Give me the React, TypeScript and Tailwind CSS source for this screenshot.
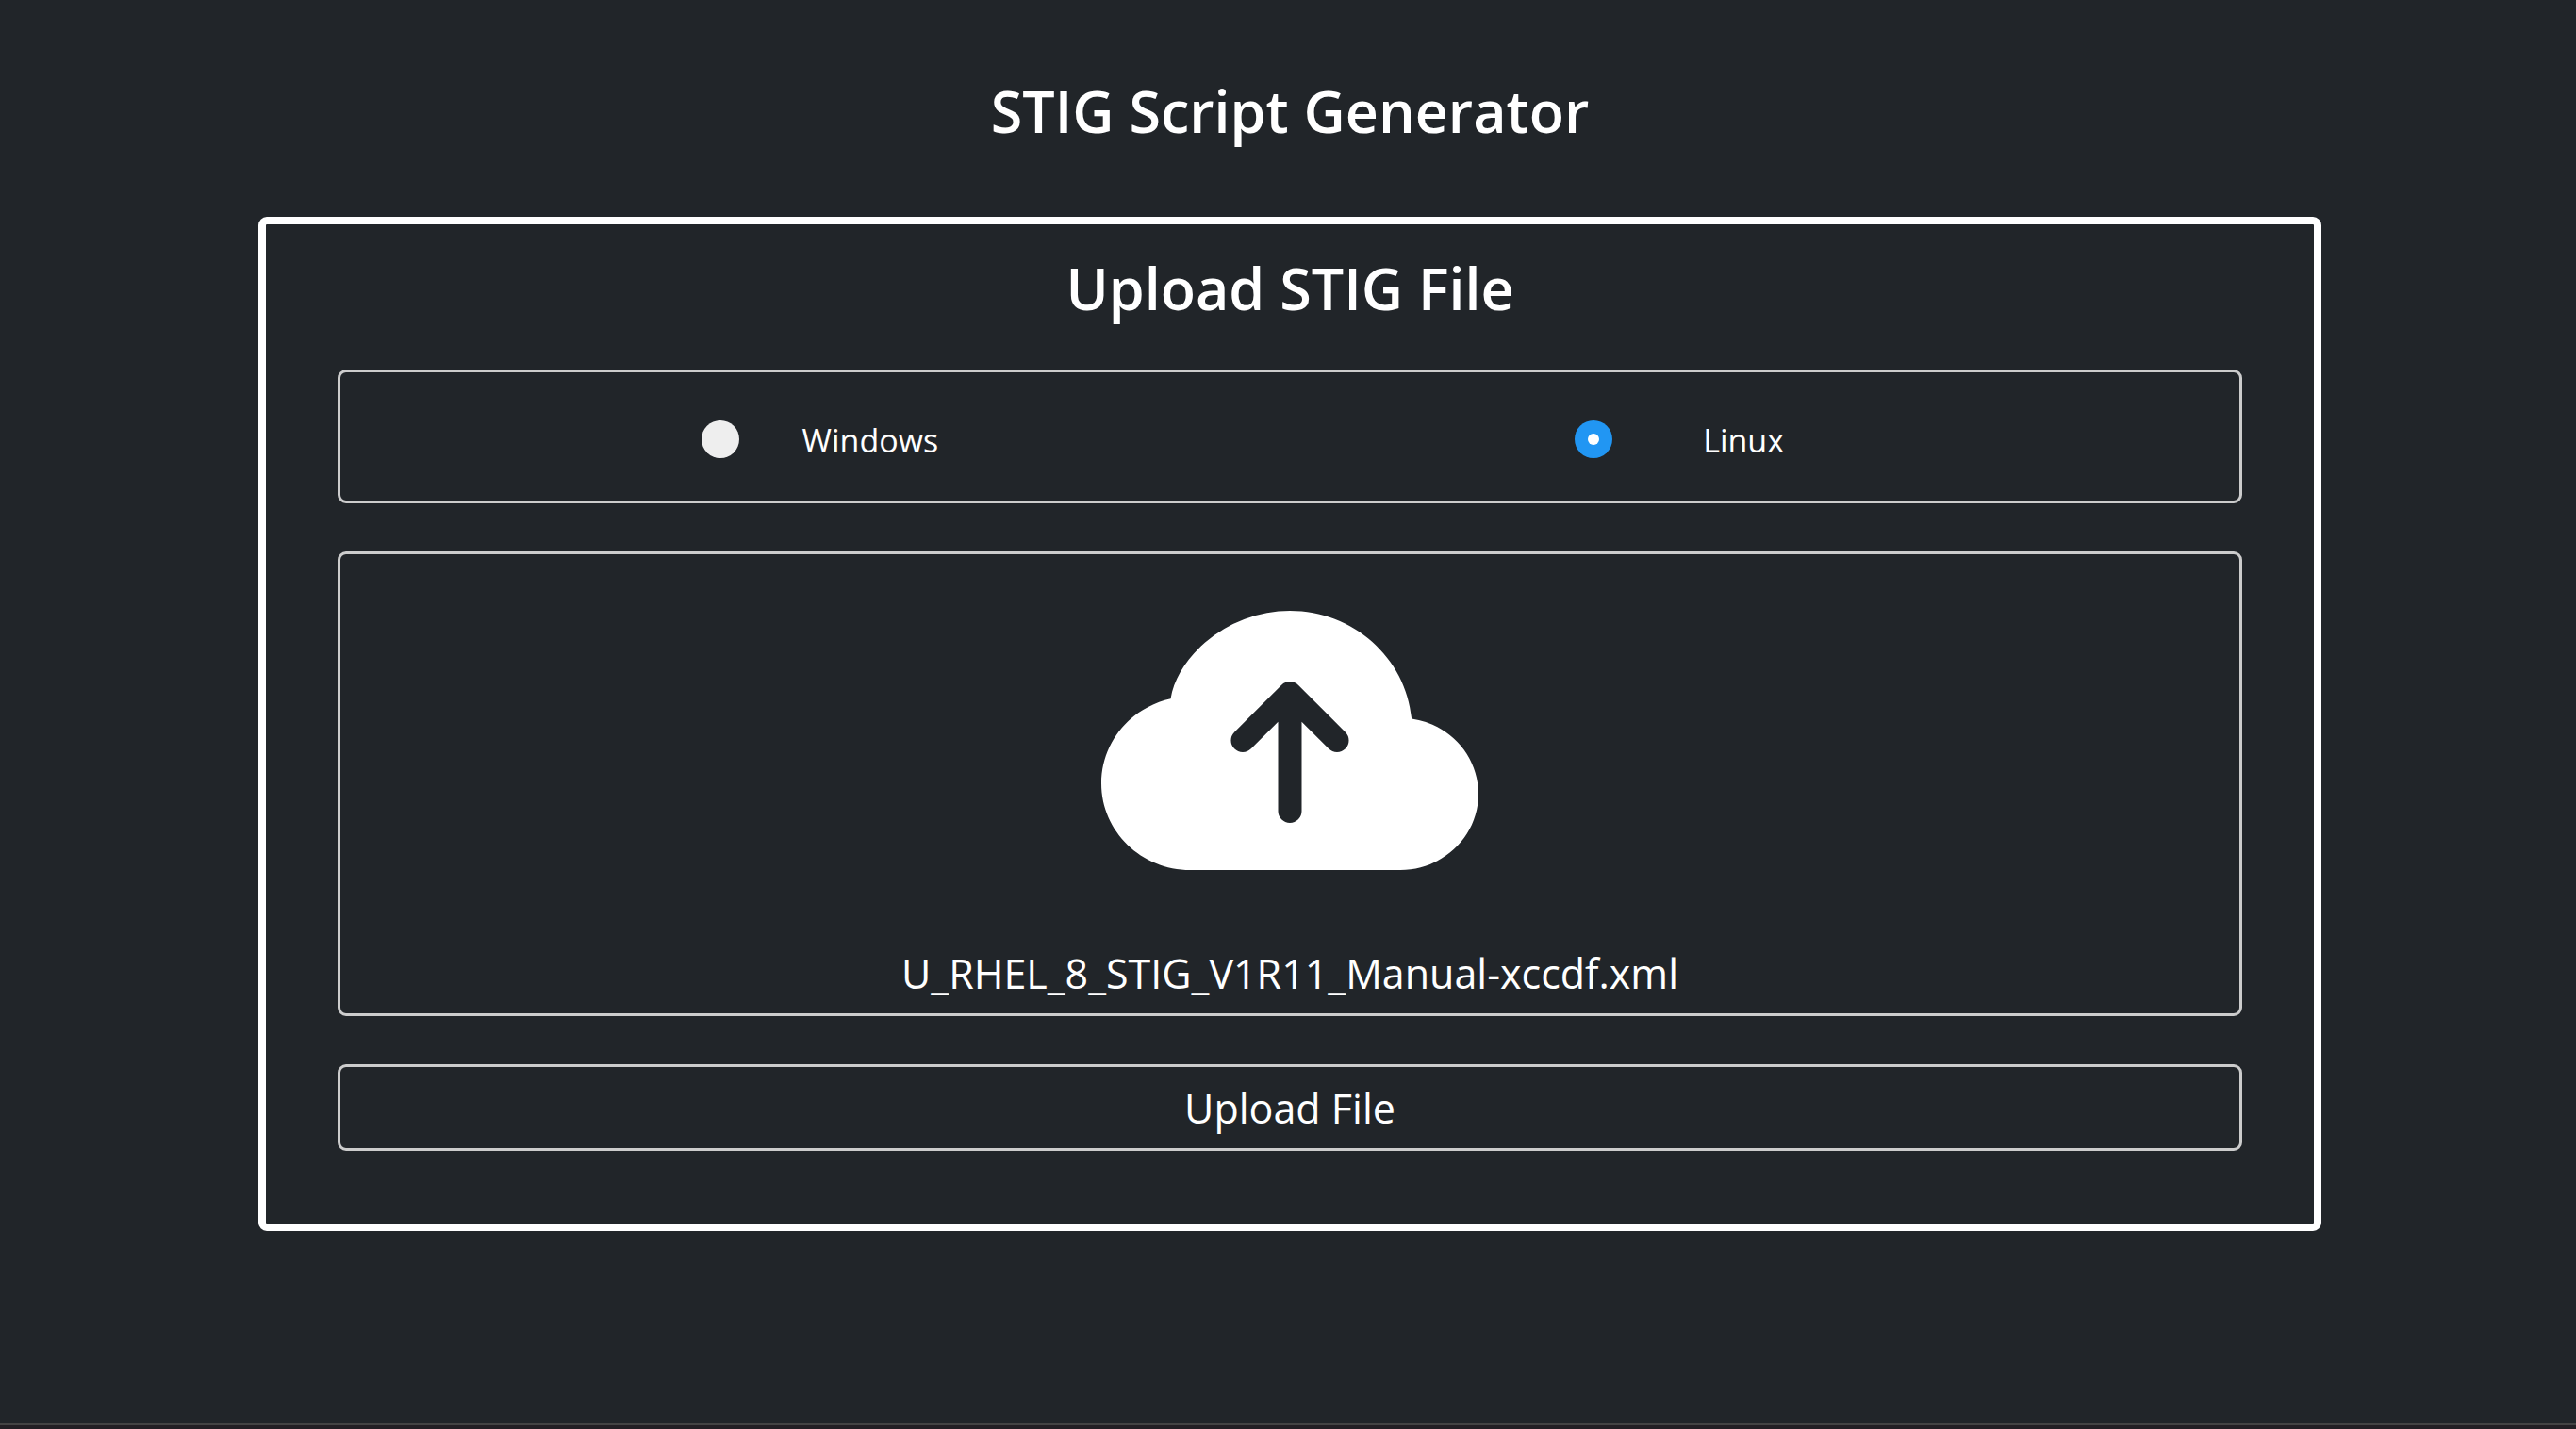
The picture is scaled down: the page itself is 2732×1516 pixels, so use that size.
import { useState } from "react";

type Platform = "Windows" | "Linux";

function PlatformOption({
  platform,
  selected,
  onSelect,
}: {
  platform: Platform;
  selected: boolean;
  onSelect: (platform: Platform) => void;
}) {
  return (
    <label className="flex h-10 w-[322px] cursor-pointer items-center text-[34px] leading-10">
      <input
        type="radio"
        name="platform"
        value={platform}
        checked={selected}
        onChange={() => onSelect(platform)}
        className="peer sr-only"
      />
      <span className="flex size-10 shrink-0 items-center justify-center rounded-full bg-[#eeeeee] peer-checked:bg-[#2196f3]">
        {selected && <span className="size-3 rounded-full bg-white" />}
      </span>
      <span className="flex-1 pt-0.5 pr-1 text-center">{platform}</span>
    </label>
  );
}

function CloudUploadIcon() {
  return (
    <svg viewBox="0 0 16 16" fill="currentColor" className="size-[400px]" aria-hidden="true">
      <path d="M8 2a5.53 5.53 0 0 0-3.594 1.342c-.766.66-1.321 1.52-1.464 2.383C1.266 6.095 0 7.555 0 9.318 0 11.366 1.708 13 3.781 13h8.906C14.502 13 16 11.57 16 9.773c0-1.636-1.242-2.969-2.834-3.194C12.923 3.999 10.69 2 8 2m2.354 5.854a.5.5 0 0 1-.708 0L8.5 6.707V10.5a.5.5 0 0 1-1 0V6.707L6.354 7.854a.5.5 0 1 1-.708-.708l2-2a.5.5 0 0 1 .708 0l2 2a.5.5 0 0 1 0 .708" />
    </svg>
  );
}

export default function App() {
  const [platform, setPlatform] = useState<Platform>("Linux");
  const [fileName, setFileName] = useState("U_RHEL_8_STIG_V1R11_Manual-xccdf.xml");

  return (
    <div className="flex min-h-screen flex-col bg-[#212529] font-['Open_Sans','Noto_Sans',sans-serif] text-white">
      <main className="flex-1 pr-[270px] pl-[274px]">
        <h1 className="pt-[78px] pb-[72px] text-center text-[61px] leading-20 font-semibold">
          STIG Script Generator
        </h1>
        <form
          className="rounded-[9px] border-8 border-white px-[76px] pb-[77px]"
          onSubmit={(event) => event.preventDefault()}
        >
          <h2 className="pt-7 pb-[46px] text-center text-[61px] leading-20 font-semibold">
            Upload STIG File
          </h2>
          <div className="flex flex-col gap-[51px]">
            <fieldset className="flex h-[142px] justify-center gap-[30%] rounded-[9px] border-3 border-[#cccccc] pt-[51px]">
              <PlatformOption
                platform="Windows"
                selected={platform === "Windows"}
                onSelect={setPlatform}
              />
              <PlatformOption
                platform="Linux"
                selected={platform === "Linux"}
                onSelect={setPlatform}
              />
            </fieldset>
            <label className="flex cursor-pointer flex-col items-center rounded-[9px] border-3 border-[#cccccc] pt-2.5 pb-[7px]">
              <CloudUploadIcon />
              <input
                type="file"
                accept=".xml"
                className="sr-only"
                onChange={(event) => {
                  const file = event.target.files?.[0];
                  if (file) setFileName(file.name);
                }}
              />
              <span className="text-[43px] leading-[70px]">{fileName}</span>
            </label>
            <button
              type="submit"
              className="cursor-pointer rounded-[9px] border-3 border-[#cccccc] pt-[9px] pb-[7px] text-[43px] leading-[70px]"
            >
              Upload File
            </button>
          </div>
        </form>
      </main>
      <footer className="h-1.5 border-t-2 border-[#444444] bg-[#231f24]" />
    </div>
  );
}
